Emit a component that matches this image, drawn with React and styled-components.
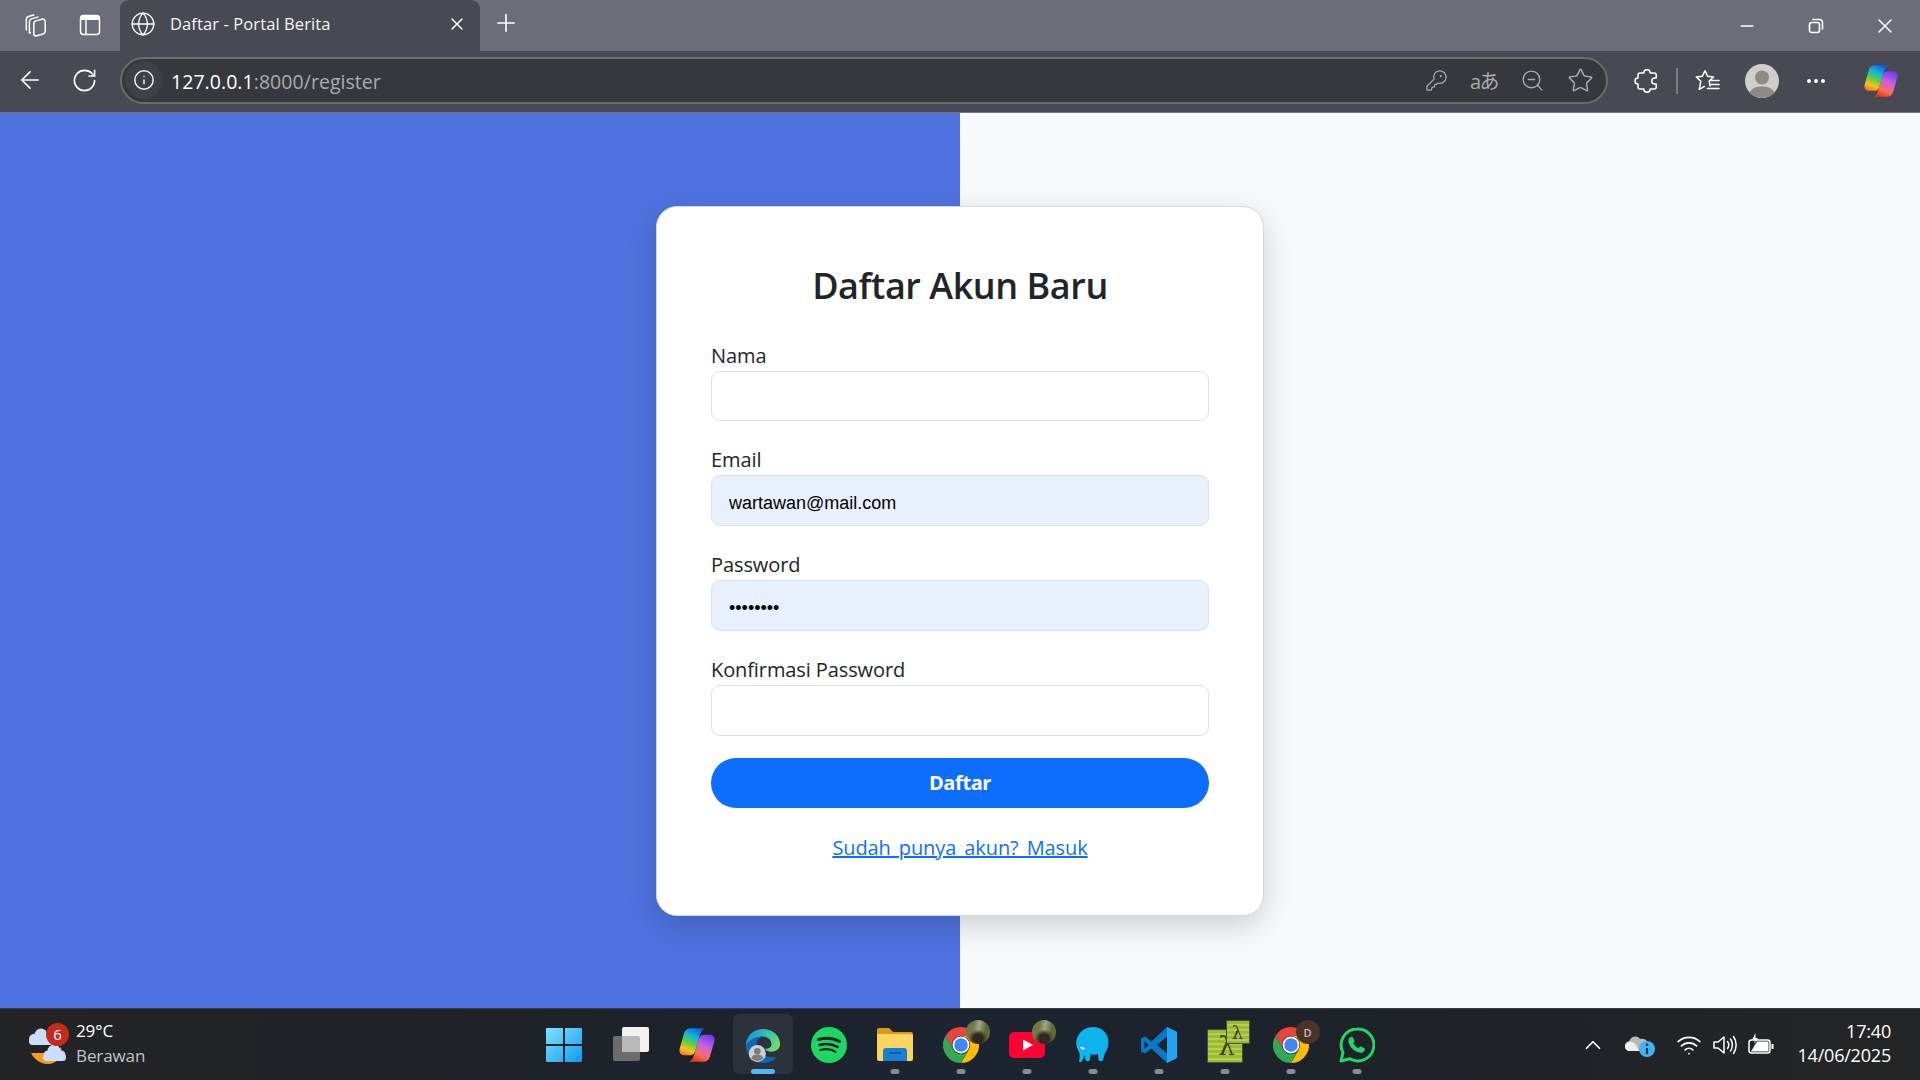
import React from "react";
import styled, { createGlobalStyle } from "styled-components";
import {
  ArrowLeft,
  RotateCw,
  Info,
  Globe,
  X,
  Plus,
  Minus,
  KeyRound,
  ZoomOut,
  Star,
  MoreHorizontal,
  ChevronUp,
  Wifi,
} from "lucide-react";

const GlobalStyle = createGlobalStyle`
  html, body { margin: 0; padding: 0; }
  body { font-family: "Open Sans", "Noto Sans", sans-serif; overflow: hidden; }
  * { box-sizing: border-box; }
`;

const Screen = styled.div`
  width: 1920px;
  height: 1080px;
  display: flex;
  flex-direction: column;
  overflow: hidden;
`;

/* browser frame */
const TabStrip = styled.div`
  height: 51px;
  flex: none;
  display: flex;
  align-items: stretch;
  padding-left: 9px;
  background: #6b6d79;
  color: #fff;
`;

const FrameButton = styled.div`
  width: ${({ $w }) => $w || 54}px;
  margin-left: ${({ $ml }) => $ml || 0}px;
  padding-bottom: ${({ $lift }) => $lift || 0}px;
  flex: none;
  display: flex;
  align-items: center;
  justify-content: center;
  color: ${({ $muted }) => ($muted ? "#a9abae" : "#fff")};
`;

const Tab = styled.div`
  width: 360px;
  margin-left: 3px;
  display: flex;
  align-items: center;
  padding: 0 12px 3px 10px;
  background: #474a52;
  border-radius: 9px 9px 0 0;
`;

const TabTitle = styled.span`
  flex: 1;
  margin-left: 14px;
  padding-bottom: 1px;
  font-size: 16.5px;
  letter-spacing: 0.1px;
  color: #f4f4f5;
  white-space: nowrap;
`;

const TabClose = styled.div`
  display: flex;
  margin-right: 1px;
`;

const StripSpacer = styled.div`
  flex: 1;
`;

const WindowButtons = styled.div`
  display: flex;
  margin-right: 1px;
`;

const Toolbar = styled.div`
  height: 62px;
  flex: none;
  display: flex;
  align-items: center;
  padding: 0 0 3px 3px;
  background: #474a52;
  border-bottom: 1px solid #75777c;
  color: #fff;
`;

const AddressBar = styled.div`
  width: 1488px;
  height: 47px;
  margin-left: 9px;
  display: flex;
  align-items: center;
  padding: 0 2px 0 3px;
  background: #36383d;
  border: 2px solid #6a6c71;
  border-radius: 24px;
`;

const InfoChip = styled.div`
  width: 38px;
  height: 38px;
  flex: none;
  display: flex;
  align-items: center;
  justify-content: center;
  border-radius: 50%;
  background: #3e4045;
  color: #f1f1f1;
`;

const Url = styled.div`
  flex: 1;
  margin-left: 8px;
  padding-top: 2px;
  font-size: 19.5px;
  letter-spacing: 0.05px;
  color: #a9abae;
  white-space: nowrap;
`;

const UrlHost = styled.span`
  color: #fff;
`;

const TranslateGlyph = styled.span`
  font-family: "Open Sans", "Noto Sans CJK JP", sans-serif;
  font-size: 20px;
  letter-spacing: -1.5px;
  color: #a9abae;
`;

const RightTools = styled.div`
  display: flex;
  align-items: center;
  padding-top: 2px;
`;

const ToolbarDivider = styled.div`
  width: 14px;
  height: 26px;
  flex: none;
  background: linear-gradient(#7b7d82, #7b7d82) center / 2px 100% no-repeat;
`;

const CopilotSlot = styled.div`
  width: 64px;
  margin-left: 9px;
  flex: none;
  display: flex;
  justify-content: center;
`;

/* page */
const Page = styled.main`
  flex: 1;
  display: flex;
  align-items: center;
  justify-content: center;
  background: linear-gradient(to right, #4e73df 50%, #f8f9fc 50%);
`;

const Card = styled.form`
  width: 608px;
  height: 710px;
  padding: 53px 54px 0;
  display: flex;
  flex-direction: column;
  background: #fff;
  border: 1px solid #d5d7df;
  border-radius: 21px;
  box-shadow: 0 10px 30px rgba(0, 0, 0, 0.17);
`;

const Heading = styled.h2`
  margin: 0 0 29px;
  height: 52px;
  line-height: 52px;
  text-align: center;
  font-size: 36px;
  font-weight: 600;
  letter-spacing: -0.45px;
  color: #212529;
`;

const Fields = styled.div`
  display: flex;
  flex-direction: column;
  gap: 24px;
`;

const Field = styled.div`
  display: flex;
  flex-direction: column;
`;

const Label = styled.label`
  height: 30px;
  line-height: 30px;
  font-size: 20px;
  letter-spacing: -0.1px;
  color: #212529;
`;

const Input = styled.input`
  width: 100%;
  height: 50.8px;
  padding: 6px 17px 0;
  font-family: "Liberation Sans", Arial, sans-serif;
  font-size: 18px;
  color: #000;
  background: ${({ $filled }) => ($filled ? "#e8f0fe" : "#fff")};
  border: 1.5px solid #dee2e6;
  border-radius: 9px;
  outline: none;
`;

const SubmitButton = styled.button`
  height: 50px;
  margin-top: 22px;
  font-family: inherit;
  font-size: 20px;
  font-weight: 700;
  letter-spacing: -0.4px;
  color: #fff;
  background: #0d6efd;
  border: 0;
  border-radius: 25px;
`;

const LoginLink = styled.a`
  align-self: center;
  margin-top: 25px;
  line-height: 30px;
  font-size: 20px;
  letter-spacing: -0.1px;
  word-spacing: 3px;
  color: #0d6efd;
  text-decoration: underline;
`;

/* taskbar */
const Taskbar = styled.footer`
  height: 72px;
  flex: none;
  display: grid;
  grid-template-columns: 1fr auto 1fr;
  align-items: center;
  background: linear-gradient(90deg, #232426 0%, #1f2228 25%, #1b2430 50%, #1f2228 75%, #242526 100%);
  border-top: 1px solid #3a3c40;
`;

const Weather = styled.div`
  display: flex;
  align-items: center;
  padding-left: 25px;
`;

const WeatherArt = styled.div`
  position: relative;
  width: 51px;
  height: 44px;
  flex: none;
`;

const WeatherBadge = styled.span`
  position: absolute;
  left: 21px;
  top: 0;
  width: 23px;
  height: 23px;
  display: flex;
  align-items: center;
  justify-content: center;
  border-radius: 50%;
  background: #c42b1c;
  color: #fff;
  font-size: 15px;
`;

const WeatherText = styled.div`
  padding-bottom: 4px;
  display: flex;
  flex-direction: column;
  font-size: 17px;
  line-height: 25px;
  letter-spacing: -0.1px;
  color: #fff;
`;

const WeatherNote = styled.span`
  color: #c4c4c4;
`;

const TaskIcons = styled.div`
  display: flex;
  padding-left: 1px;
`;

const TaskItem = styled.div`
  position: relative;
  width: 66px;
  height: 71px;
  display: flex;
  align-items: center;
  justify-content: center;
  padding-top: 1px;

  &::before {
    content: "";
    display: ${({ $active }) => ($active ? "block" : "none")};
    position: absolute;
    left: 3px;
    right: 3px;
    top: 5px;
    bottom: 6px;
    background: rgba(255, 255, 255, 0.07);
    border-radius: 7px;
  }

  &::after {
    content: "";
    display: ${({ $open, $active }) => ($open || $active ? "block" : "none")};
    position: absolute;
    left: 50%;
    bottom: 6px;
    width: ${({ $active }) => ($active ? 24 : 9)}px;
    height: 5px;
    transform: translateX(-50%);
    background: ${({ $active }) => ($active ? "#4fb9f2" : "#8a8c90")};
    border-radius: 3px;
  }
`;

const TaskIconWrap = styled.div`
  position: relative;
  width: 36px;
  height: 36px;
  display: flex;
`;

const ProfileDot = styled.span`
  position: absolute;
  top: -7px;
  right: -11px;
  width: 24px;
  height: 24px;
  display: flex;
  align-items: center;
  justify-content: center;
  border-radius: 50%;
  font-size: 11px;
  font-weight: 600;
  color: #c9bdb6;
  background: ${({ $plain }) =>
    $plain
      ? "#4a3329"
      : "radial-gradient(circle at 50% 78%, #33281f 0 22%, transparent 42%), linear-gradient(100deg, #6f7a48 0 30%, #a7a581 50%, #5f6a3b 75%), #6d6048"};
`;

const Tray = styled.div`
  display: flex;
  align-items: center;
  justify-content: flex-end;
  padding-right: 29px;
  color: #fff;
`;

const TraySlot = styled.div`
  width: ${({ $w }) => $w}px;
  flex: none;
  display: flex;
  justify-content: center;
`;

const Clock = styled.div`
  margin-left: 18px;
  padding-bottom: 3px;
  display: flex;
  flex-direction: column;
  align-items: flex-end;
  font-size: 18px;
  line-height: 24px;
  letter-spacing: -0.2px;
`;

/* drawn icons */
const CollectionsIcon = () => (
  <svg width="26" height="26" viewBox="0 0 26 26" fill="none" stroke="#fff" strokeWidth="1.5" strokeLinejoin="round">
    <path d="M13 24l7-2a3 3 0 0 0 2.2-2.9V9.5A2.5 2.5 0 0 0 19 7.2l-6 1.7a3 3 0 0 0-2.2 2.9v10a2.2 2.2 0 0 0 2.2 2.2z" />
    <path d="M8 20.5l-1.6.4V9.8a3 3 0 0 1 2.1-2.9l7-2" />
    <path d="M4.2 18l-.9-.4V7.4a3 3 0 0 1 2.1-2.9l6-1.8" />
  </svg>
);

const SidebarIcon = () => (
  <svg width="24" height="24" viewBox="0 0 24 24" fill="none">
    <rect x="2.5" y="2.5" width="19" height="19" rx="3" stroke="#fff" strokeWidth="1.5" />
    <path d="M3 7h18V5a2 2 0 0 0-2-2H5a2 2 0 0 0-2 2z" fill="#fff" />
    <path d="M8 7v14" stroke="#fff" strokeWidth="1.5" />
  </svg>
);

const RestoreIcon = () => (
  <svg width="18" height="18" viewBox="0 0 18 18" fill="none" stroke="#fff" strokeWidth="1.6">
    <rect x="2.5" y="5.5" width="10" height="10" rx="2.2" />
    <path d="M6 2.5h6.5a3 3 0 0 1 3 3V12" strokeLinecap="round" />
  </svg>
);

const ExtensionsIcon = () => (
  <svg width="30" height="30" viewBox="-1 0 30 30" fill="none" stroke="#fff" strokeWidth="1.5" strokeLinejoin="round">
    <path d="M11.800 7a3.200 3.200 0 0 1 6.400 0h4a2 2 0 0 1 2 2v3h-1.400a3 3 0 0 0 0 6H24.200v3a2 2 0 0 1-2 2h-4a3.200 3.200 0 0 1-6.400 0H8a2 2 0 0 1-2-2v-3a3 3 0 0 1 0-6V9a2 2 0 0 1 2-2z" />
  </svg>
);

const FavoritesIcon = () => (
  <svg width="28" height="28" viewBox="0 0 28 28" fill="none" stroke="#fff" strokeWidth="1.5" strokeLinejoin="round">
    <path d="M11 3.5l2.6 5.8 5.9.7-4.3 4.1 1 5.4" />
    <path d="M11 3.5L8.4 9.3l-6.2.7 4.6 4.3-1.5 8 5.5-3.2" />
    <path d="M17 13.5h8M17 17.5h8M13.5 21.5h11.5" strokeLinecap="round" />
  </svg>
);

const AvatarIcon = () => (
  <svg width="34" height="34" viewBox="0 0 34 34">
    <circle cx="17" cy="17" r="17" fill="#cfcec9" />
    <circle cx="17" cy="13.5" r="7" fill="#8e8b86" />
    <path d="M4.5 28.5C7 24 11.5 22.5 17 22.5s10 1.5 12.5 6A17 17 0 0 1 4.5 28.5z" fill="#8e8b86" />
  </svg>
);

const CopilotIcon = ({ id, size }) => (
  <svg width={size} height={size} viewBox="2 3 28 26">
    <defs>
      <linearGradient id={`${id}a`} x1="0.7" y1="0" x2="0.3" y2="1">
        <stop offset="0" stopColor="#0f5fe6" />
        <stop offset="0.3" stopColor="#12b5e0" />
        <stop offset="0.58" stopColor="#5fd03a" />
        <stop offset="0.82" stopColor="#fbc21a" />
        <stop offset="1" stopColor="#f5821f" />
      </linearGradient>
      <linearGradient id={`${id}b`} x1="0.7" y1="0" x2="0.3" y2="1">
        <stop offset="0" stopColor="#6a3ff0" />
        <stop offset="0.4" stopColor="#cc5fe0" />
        <stop offset="0.75" stopColor="#fb6f5a" />
        <stop offset="1" stopColor="#e8351f" />
      </linearGradient>
    </defs>
    <path d="M21 29c3 0 4.500-2 5.200-4.500L29.500 13c.7-3-1-5-3.500-5H21c-2 0-3 1.400-3.700 3.500L14 23c-1 3-2 5-4 6z" fill={`url(#${id}b)`} />
    <path d="M11 3C8 3 6.500 5 5.800 7.500L2.500 19c-.7 3 1 5 3.500 5H11c2 0 3-1.400 3.700-3.500L18 9c1-3 2-5 4-6z" fill={`url(#${id}a)`} />
  </svg>
);

const WeatherIcon = () => (
  <svg width="51" height="44" viewBox="0 0 51 44">
    <path d="M6 30h15l8-3c3 1 5 0 7-3 2 9-4 17-13 17-8 0-14-5-17-11z" fill="#f39c1d" />
    <g fill="#c9defa">
      <circle cx="9" cy="16" r="5" />
      <circle cx="16" cy="12" r="6.500" />
      <circle cx="23" cy="16" r="5" />
      <rect x="4" y="15" width="24" height="7" rx="3.500" />
      <circle cx="23" cy="32" r="4.500" />
      <circle cx="29" cy="28" r="6.500" />
      <circle cx="36" cy="32" r="4.500" />
      <rect x="18" y="31" width="23" height="7" rx="3.500" />
    </g>
  </svg>
);

const StartIcon = () => (
  <svg width="36" height="36" viewBox="1 0 36 36" overflow="visible">
    <defs>
      <linearGradient id="startFill" x1="0" y1="0" x2="1" y2="1">
        <stop offset="0" stopColor="#7fe3ff" />
        <stop offset="1" stopColor="#0f9af5" />
      </linearGradient>
    </defs>
    <path d="M1 1h16v16H0V2a1 1 0 0 1 1-1zM19 1h16a1 1 0 0 1 1 1v15H19zM0 19h17v16H1a1 1 0 0 1-1-1zM19 19h17v15a1 1 0 0 1-1 1H19z" fill="url(#startFill)" />
  </svg>
);

const TaskViewIcon = () => (
  <svg width="36" height="36" viewBox="0 0 36 36">
    <rect x="0" y="9" width="27" height="25" rx="2" fill="#6c6c6c" />
    <rect x="9" y="0" width="27" height="25" rx="2" fill="#f1f1f1" />
    <path d="M9 9h16a2 2 0 0 1 2 2v14H11a2 2 0 0 1-2-2z" fill="#b9b9b9" />
  </svg>
);

const EdgeIcon = () => (
  <svg width="38" height="38" viewBox="0 0 38 38">
    <defs>
      <linearGradient id="edgeTop" x1="0" y1="0.3" x2="1" y2="0.7">
        <stop offset="0" stopColor="#1a8fd8" />
        <stop offset="0.55" stopColor="#36c6b0" />
        <stop offset="1" stopColor="#7fdc63" />
      </linearGradient>
    </defs>
    <path d="M1 19C1 8 9 1 19 1c10 0 18 7 18 16 0 5-4 8-9 8-3 0-6-1-7-3 5 0 7-2 7-5 0-5-5-8-9-8C11 9 4 13 1 19z" fill="url(#edgeTop)" />
    <path d="M1 19c3-6 10-10 18-10-6 1-8 7-6 13 2 6 9 9 16 9 3 0 4 0 5-1-3 4-9 7-15 7C9 37 1 29 1 19z" fill="#0f66b5" />
    <circle cx="13" cy="27" r="9" fill="#cfcfcf" />
    <circle cx="13" cy="24.500" r="3.500" fill="#7c7c7c" />
    <path d="M6.500 32c1-3 3.500-4 6.500-4s5.500 1 6.500 4a9 9 0 0 1-13 0z" fill="#7c7c7c" />
  </svg>
);

const SpotifyIcon = () => (
  <svg width="36" height="36" viewBox="0 0 36 36" fill="none" stroke="#16212a" strokeLinecap="round">
    <circle cx="18" cy="18" r="18" fill="#1ed760" stroke="none" />
    <path d="M7.500 12.500c7-2 15-1.500 21 2" strokeWidth="3" />
    <path d="M8.500 18c6-1.700 13-1 18 2" strokeWidth="2.600" />
    <path d="M9.500 23c5-1.300 11-.8 15 1.800" strokeWidth="2.200" />
  </svg>
);

const FilesIcon = () => (
  <svg width="36" height="36" viewBox="0 0 36 36">
    <path d="M0 3a2 2 0 0 1 2-2h10l4 4h18a2 2 0 0 1 2 2v6H0z" fill="#d99a1a" />
    <path d="M0 7h34a2 2 0 0 1 2 2v23a2 2 0 0 1-2 2H2a2 2 0 0 1-2-2z" fill="#fcd55f" />
    <path d="M6 34V24a3 3 0 0 1 3-3h18a3 3 0 0 1 3 3v10z" fill="#1a7fd4" />
    <path d="M12 26h12" stroke="#0d4f92" strokeWidth="1.500" />
  </svg>
);

const ChromeIcon = () => (
  <svg width="36" height="36" viewBox="0 0 36 36">
    <path d="M2.400 9A18 18 0 0 1 33.600 9H18A9 9 0 0 0 10.200 22.500z" fill="#e8453c" />
    <path d="M33.600 9A18 18 0 0 1 18 36L25.800 22.500A9 9 0 0 0 18 9z" fill="#fbbc05" />
    <path d="M18 36A18 18 0 0 1 2.400 9L10.200 22.500A9 9 0 0 0 25.800 22.500z" fill="#34a853" />
    <circle cx="18" cy="18" r="8.500" fill="#fff" />
    <circle cx="18" cy="18" r="6.800" fill="#4285f4" />
  </svg>
);

const YoutubeIcon = () => (
  <svg width="36" height="36" viewBox="0 0 36 36">
    <rect x="0" y="5" width="36" height="26" rx="5" fill="#ff0033" />
    <path d="M14 12.500l10 5.500-10 5.500z" fill="#fff" />
  </svg>
);

const ElephantIcon = () => (
  <svg width="36" height="36" viewBox="0 0 36 36">
    <path d="M18 0c8 0 14 5 15 12 1 5 0 10-3 14l-2 7c0 1.500-4 1.500-4.500 0L23 27c-2 .8-5 .8-7.500.3L15 33c-.5 1.500-4 1.500-4.500 0l-1-5C9 31 8 33.500 6 35c-1 .5-2 0-2-1 1-3 1-6 0-9-3-5-4-11-1-16C6 3 12 0 18 0z" fill="#0fb3ee" />
    <path d="M5 20c2-.5 4 .5 5 2-1.500 1-4 .5-5-2z" fill="#d6f1fb" />
  </svg>
);

const VsCodeIcon = () => (
  <svg width="36" height="36" viewBox="0 0 36 36">
    <path
      fillRule="evenodd"
      d="M26 0l10 5v26l-10 5-15.500-14.500L4 26.500 0 24.500v-13l4-2 6.500 5zM26 9.500L16 18l10 8.500zM3.500 14v8l4-4z"
      fill="#0a78c8"
    />
    <path d="M26 0l10 5v26l-10 5z" fill="#23a3f2" />
  </svg>
);

const LambdaTiles = styled.div`
  position: relative;
  width: 36px;
  height: 36px;
`;

const LambdaTile = styled.span`
  position: absolute;
  ${({ $small }) =>
    $small
      ? "right: -7px; top: -7px; width: 24px; height: 24px; font-size: 18px;"
      : "left: 0; bottom: 0; width: 36px; height: 34px; font-size: 26px; padding-left: 4px;"}
  display: flex;
  align-items: center;
  justify-content: center;
  font-family: "DejaVu Serif", serif;
  color: #3a3f22;
  background: repeating-linear-gradient(#9cbb2f 0 3px, #b6cf53 3px 5px);
  border: 1px solid #4a4a4a;
`;

const WhatsappIcon = () => (
  <svg width="36" height="36" viewBox="0 0 36 36">
    <path d="M18 2A16 16 0 0 0 4 25.500L2 34l8.800-2.200A16 16 0 1 0 18 2z" fill="none" stroke="#25d366" strokeWidth="3" strokeLinejoin="round" />
    <path d="M12.500 9.800c.7 0 1.300.2 1.600.9l1.300 3c.2.500.1 1-.2 1.400l-1 1.200c1.300 2.300 3 3.900 5.300 5l1.300-1.500c.4-.4.9-.5 1.400-.3l2.900 1.400c.6.300.8.800.7 1.500-.4 2.300-2.200 3.600-4.300 3.400-6-.6-11.500-6-12.100-11.500-.2-2.300 1.200-4.300 3.100-4.300z" fill="#25d366" />
  </svg>
);

const OneDriveIcon = () => (
  <svg width="32" height="28" viewBox="0 0 32 28">
    <path d="M3 20a5 5 0 0 1 1-9.500C6 5 12 4 15 8c3-1 7 0 7.500 4 3 0 4.500 2 4.500 4v4z" fill="#b8b8b8" />
    <path d="M3 20a5 5 0 0 1 1-9.500c3 0 5 1 7 3l3 6.500z" fill="#eeeeee" />
    <circle cx="22" cy="18" r="8" fill="#3fb4f0" />
    <path d="M22 17v6" stroke="#10273a" strokeWidth="2.200" />
    <circle cx="22" cy="13.800" r="1.300" fill="#10273a" />
  </svg>
);

const SpeakerIcon = () => (
  <svg width="26" height="24" viewBox="0 0 26 24" fill="none" stroke="#fff" strokeWidth="1.500" strokeLinejoin="round" strokeLinecap="round">
    <path d="M2 9v6h4l6 5V4L6 9z" />
    <path d="M15.500 8.500c1.500 2 1.500 5 0 7M18.500 6c2.500 3.500 2.500 8.500 0 12M21.500 3.500c3.500 5 3.500 12 0 17" />
  </svg>
);

const BatteryIcon = () => (
  <svg width="26" height="24" viewBox="0 0 26 24" fill="none" stroke="#fff" strokeWidth="1.500">
    <rect x="1" y="7" width="21" height="13" rx="2.500" />
    <path d="M24.500 11v5" strokeWidth="2" />
    <path d="M3 18.500L9 8.500h11.500v10z" fill="#fff" stroke="none" />
    <path d="M7.500 0L4 7h3l-1 4 4-6H7.500z" fill="#fff" stroke="none" />
  </svg>
);

const taskIcons = [
  { key: "start", icon: <StartIcon /> },
  { key: "view", icon: <TaskViewIcon /> },
  { key: "copilot", icon: <CopilotIcon id="taskCopilot" size={36} /> },
  { key: "edge", icon: <EdgeIcon />, active: true },
  { key: "spotify", icon: <SpotifyIcon /> },
  { key: "files", icon: <FilesIcon />, open: true },
  { key: "chrome", icon: <ChromeIcon />, open: true, dot: "photo" },
  { key: "youtube", icon: <YoutubeIcon />, open: true, dot: "photo" },
  { key: "pgadmin", icon: <ElephantIcon />, open: true },
  { key: "vscode", icon: <VsCodeIcon />, open: true },
  {
    key: "lambda",
    icon: (
      <LambdaTiles>
        <LambdaTile>λ</LambdaTile>
        <LambdaTile $small>λ</LambdaTile>
      </LambdaTiles>
    ),
    open: true,
  },
  { key: "chrome2", icon: <ChromeIcon />, open: true, dot: "D" },
  { key: "whatsapp", icon: <WhatsappIcon />, open: true },
];

const fields = [
  { id: "nama", label: "Nama", type: "text", value: "" },
  { id: "email", label: "Email", type: "email", value: "wartawan@mail.com" },
  { id: "password", label: "Password", type: "password", value: "password" },
  { id: "confirm", label: "Konfirmasi Password", type: "password", value: "" },
];

const App = () => (
  <Screen>
    <GlobalStyle />
    <TabStrip>
      <FrameButton $lift={2}>
        <CollectionsIcon />
      </FrameButton>
      <FrameButton $lift={2}>
        <SidebarIcon />
      </FrameButton>
      <Tab>
        <Globe size={26} strokeWidth={1.2} color="#fff" />
        <TabTitle>Daftar - Portal Berita</TabTitle>
        <TabClose>
          <X size={20} strokeWidth={1.7} color="#fff" />
        </TabClose>
      </Tab>
      <FrameButton $w={52} $lift={5}>
        <Plus size={28} strokeWidth={1.4} />
      </FrameButton>
      <StripSpacer />
      <WindowButtons>
        <FrameButton $w={69}>
          <Minus size={20} strokeWidth={1.6} />
        </FrameButton>
        <FrameButton $w={69}>
          <RestoreIcon />
        </FrameButton>
        <FrameButton $w={69}>
          <X size={24} strokeWidth={1.5} />
        </FrameButton>
      </WindowButtons>
    </TabStrip>

    <Toolbar>
      <FrameButton>
        <ArrowLeft size={28} strokeWidth={1.4} />
      </FrameButton>
      <FrameButton>
        <RotateCw size={27} strokeWidth={1.4} />
      </FrameButton>
      <AddressBar>
        <InfoChip>
          <Info size={22} strokeWidth={1.6} />
        </InfoChip>
        <Url>
          <UrlHost>127.0.0.1</UrlHost>:8000/register
        </Url>
        <FrameButton $w={48} $muted>
          <KeyRound size={23} strokeWidth={1.3} />
        </FrameButton>
        <FrameButton $w={48} $muted>
          <TranslateGlyph>aあ</TranslateGlyph>
        </FrameButton>
        <FrameButton $w={48} $muted>
          <ZoomOut size={25} strokeWidth={1.3} />
        </FrameButton>
        <FrameButton $w={48} $muted>
          <Star size={27} strokeWidth={1.3} />
        </FrameButton>
      </AddressBar>
      <RightTools>
        <FrameButton $w={48} $ml={14}>
          <ExtensionsIcon />
        </FrameButton>
        <ToolbarDivider />
        <FrameButton $w={48}>
          <FavoritesIcon />
        </FrameButton>
        <FrameButton $w={60}>
          <AvatarIcon />
        </FrameButton>
        <FrameButton $w={48}>
          <MoreHorizontal size={24} strokeWidth={2} />
        </FrameButton>
        <CopilotSlot>
          <CopilotIcon id="barCopilot" size={34} />
        </CopilotSlot>
      </RightTools>
    </Toolbar>

    <Page>
      <Card onSubmit={(e) => e.preventDefault()}>
        <Heading>Daftar Akun Baru</Heading>
        <Fields>
          {fields.map((field) => (
            <Field key={field.id}>
              <Label htmlFor={field.id}>{field.label}</Label>
              <Input
                id={field.id}
                type={field.type}
                defaultValue={field.value}
                $filled={field.value !== ""}
                readOnly
              />
            </Field>
          ))}
        </Fields>
        <SubmitButton type="submit">Daftar</SubmitButton>
        <LoginLink href="#login">Sudah punya akun? Masuk</LoginLink>
      </Card>
    </Page>

    <Taskbar>
      <Weather>
        <WeatherArt>
          <WeatherIcon />
          <WeatherBadge>6</WeatherBadge>
        </WeatherArt>
        <WeatherText>
          <span>29°C</span>
          <WeatherNote>Berawan</WeatherNote>
        </WeatherText>
      </Weather>

      <TaskIcons>
        {taskIcons.map((item) => (
          <TaskItem key={item.key} $active={item.active} $open={item.open}>
            <TaskIconWrap>
              {item.icon}
              {item.dot && (
                <ProfileDot $plain={item.dot === "D"}>
                  {item.dot === "D" ? "D" : ""}
                </ProfileDot>
              )}
            </TaskIconWrap>
          </TaskItem>
        ))}
      </TaskIcons>

      <Tray>
        <TraySlot $w={36}>
          <ChevronUp size={26} strokeWidth={1.6} />
        </TraySlot>
        <TraySlot $w={60}>
          <OneDriveIcon />
        </TraySlot>
        <TraySlot $w={36}>
          <Wifi size={26} strokeWidth={1.6} />
        </TraySlot>
        <TraySlot $w={36}>
          <SpeakerIcon />
        </TraySlot>
        <TraySlot $w={36}>
          <BatteryIcon />
        </TraySlot>
        <Clock>
          <span>17:40</span>
          <span>14/06/2025</span>
        </Clock>
      </Tray>
    </Taskbar>
  </Screen>
);

export default App;
